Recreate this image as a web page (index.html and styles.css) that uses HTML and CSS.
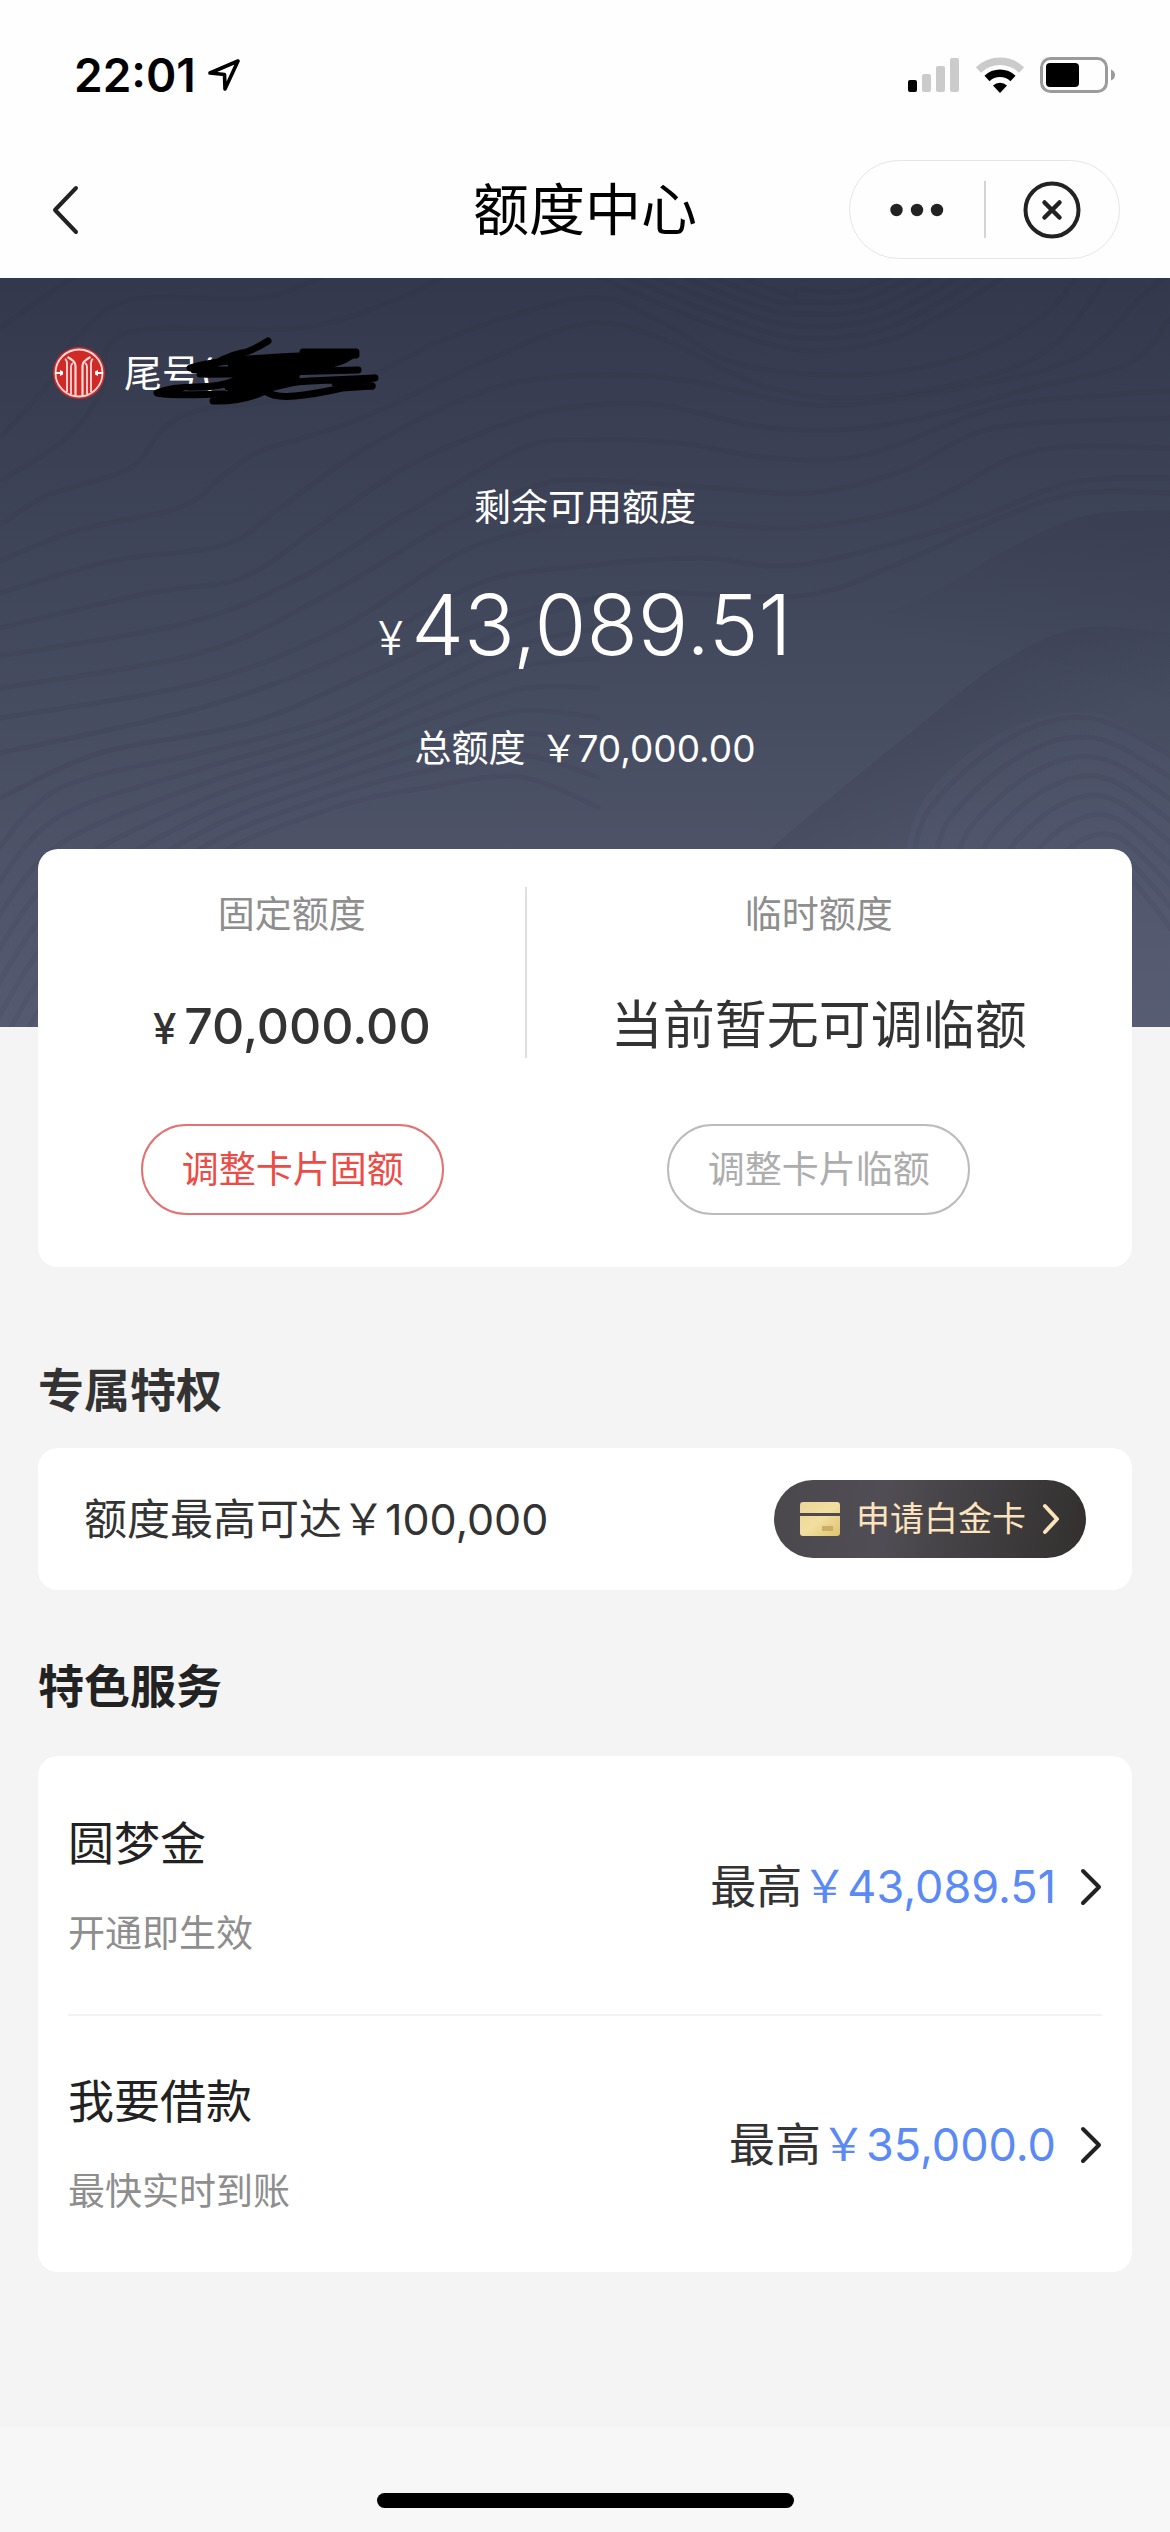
FILE: index.html
```html
<!DOCTYPE html>
<html lang="zh-CN">
<head>
<meta charset="utf-8">
<meta name="viewport" content="width=device-width, initial-scale=1">
<title>额度中心</title>
<link rel="stylesheet" href="styles.css">
</head>
<body>
<header class="top">
  <div class="status">
    <div class="status-left">
      <time class="clock">22:01</time>
      <svg class="location" width="32" height="32" viewBox="0 0 32 32" aria-hidden="true"><path d="M2 14 30 2 17 30 16.500 15.500Z" fill="none" stroke="#000" stroke-width="3.600" stroke-linejoin="round"/></svg>
    </div>
    <div class="status-right">
      <svg width="52" height="36" viewBox="0 0 52 36" aria-hidden="true">
        <rect x="0" y="23" width="9" height="12" rx="2"/>
        <g fill="#cbcbcb"><rect x="14" y="17" width="9" height="18" rx="2"/><rect x="28" y="9" width="9" height="26" rx="2"/><rect x="42" y="1" width="9" height="34" rx="2"/></g>
      </svg>
      <svg width="48" height="36" viewBox="0 0 48 36" aria-hidden="true">
        <path d="M2.500 13a31 31 0 0 1 43 0" fill="none" stroke="#cbcbcb" stroke-width="7.500"/>
        <path d="M11 21.500a19 19 0 0 1 26 0" fill="none" stroke="#000" stroke-width="7.500"/>
        <path d="M24 36 17 28.500a10 10 0 0 1 14 0Z"/>
      </svg>
      <svg width="76" height="36" viewBox="0 0 76 36" aria-hidden="true">
        <rect x="1.500" y="1.500" width="65" height="33" rx="9" fill="none" stroke="#9b9b9b" stroke-width="3"/>
        <rect x="6" y="6" width="33" height="24" rx="4"/>
        <path d="M71 12.500q4 1.500 4 5.500t-4 5.500Z" fill="#9b9b9b"/>
      </svg>
    </div>
  </div>
  <nav class="nav">
    <button class="back" type="button" aria-label="返回">
      <svg width="30" height="50" viewBox="0 0 30 50" aria-hidden="true"><path d="M26 3 5 25 26 47" fill="none" stroke="#222" stroke-width="4" stroke-linecap="round" stroke-linejoin="round"/></svg>
    </button>
    <h1 class="title">额度中心</h1>
    <div class="capsule">
      <button class="capsule-button" type="button" aria-label="更多">
        <svg width="54" height="14" viewBox="0 0 54 14" aria-hidden="true"><g fill="#222"><circle cx="6.500" cy="7" r="6.200"/><circle cx="27" cy="7" r="6.200"/><circle cx="47" cy="7" r="6.200"/></g></svg>
      </button>
      <button class="capsule-button" type="button" aria-label="关闭">
        <svg width="58" height="58" viewBox="0 0 58 58" aria-hidden="true"><g fill="none" stroke="#222" stroke-width="4"><circle cx="29" cy="29" r="26.500"/><path d="m21.500 21.500 15 15m0-15-15 15" stroke-width="4.500" stroke-linecap="round"/></g></svg>
      </button>
    </div>
  </nav>
</header>

<main class="content">
  <section class="hero">
    <svg class="contours" viewBox="0 0 1170 749" preserveAspectRatio="none" aria-hidden="true"></svg>
    <div class="account">
      <svg class="logo" width="54" height="52" viewBox="0 0 54 52" aria-hidden="true">
        <circle cx="27" cy="26" r="26" fill="#cf2a26"/>
        <g fill="none" stroke="#f7d9dc" stroke-width="1.800">
          <circle cx="27" cy="26" r="23.500"/>
          <path d="M15 45V17q0-4-2-5M39 45V17q0-4 2-5M19 47V20q0-3 2-4M35 47V20q0-3-2-4"/>
          <path d="M23.500 49V19q0-5-8-9M30.500 49V19q0-5 8-9" stroke-width="2.200"/>
        </g>
        <path d="M3 26h8m32 0h8" stroke="#fff" stroke-width="2"/>
        <path d="M8 23v6l3-1.500v-3ZM46 23v6l-3-1.500v-3Z" fill="#fff"/>
      </svg>
      <span class="account-label">尾号(</span>
      <svg class="scribble" width="236" height="74" viewBox="0 0 236 74" aria-hidden="true">
        <path d="M76 24 110 20 162 15 190 22 178 32 150 38 148 48 110 57 96 62 76 56 84 44Z"/>
        <g fill="none" stroke="#000" stroke-width="7" stroke-linecap="round" stroke-linejoin="round">
          <path d="M118 4Q102 14 92 16T72 23T60 33"/>
          <path d="M40 31Q52 27 78 24T150 19L206 18"/>
          <path d="M153 15H206Q196 24 182 27T140 33H44"/>
          <path d="M56 37 208 33"/>
          <path d="M50 37H90"/>
          <path d="M78 50 160 44 225 41 185 46 222 49"/>
          <path d="M84 44Q70 50 46 50T7 56Q16 59 74 57"/>
          <path d="M63 64Q92 65 115 54Q124 61 145 59T192 51L222 49"/>
          <path d="M70 61 108 52"/>
        </g>
      </svg>
    </div>
    <p class="caption">剩余可用额度</p>
    <p class="balance"><span class="balance-sign">¥</span>43,089.51</p>
    <p class="caption total"><span>总额度</span><span class="total-amount">￥70,000.00</span></p>
  </section>

  <section class="card limits">
    <div class="limit fixed">
      <div class="figures">
        <h2 class="limit-name">固定额度</h2>
        <p class="limit-value amount"><span class="sign">¥</span>70,000.00</p>
      </div>
      <button class="pill pill-red" type="button">调整卡片固额</button>
    </div>
    <div class="limit temporary">
      <div class="figures">
        <h2 class="limit-name">临时额度</h2>
        <p class="limit-value">当前暂无可调临额</p>
      </div>
      <button class="pill" type="button" disabled>调整卡片临额</button>
    </div>
  </section>

  <h2 class="heading heading-first">专属特权</h2>
  <section class="card privilege">
    <p class="privilege-text">额度最高可达￥100,000</p>
    <button class="apply" type="button">
      <svg width="40" height="34" viewBox="0 0 40 34" aria-hidden="true">
        <defs><linearGradient id="gold" x2="1" y2="1"><stop stop-color="#ebd497"/><stop offset=".5" stop-color="#f2dfa0"/><stop offset="1" stop-color="#dfc172"/></linearGradient></defs>
        <path d="M3 0H37a3 3 0 0 1 3 3V11H0V3a3 3 0 0 1 3-3ZM0 14H40V31a3 3 0 0 1-3 3H3a3 3 0 0 1-3-3Z" fill="url(#gold)"/>
        <rect x="22" y="24" width="11" height="5" fill="#c9ac65"/>
      </svg>
      <span>申请白金卡</span>
      <svg width="18" height="32" viewBox="0 0 18 32" aria-hidden="true"><path d="M3 3 15 16 3 29" fill="none" stroke="#fbe3bd" stroke-width="4" stroke-linecap="round" stroke-linejoin="round"/></svg>
    </button>
  </section>

  <h2 class="heading heading-second">特色服务</h2>
  <section class="card services">
    <a class="service" href="#dream">
      <span class="service-info"><span class="service-name">圆梦金</span><span class="service-note">开通即生效</span></span>
      <span class="service-amount">最高<span class="blue">￥43,089.51</span></span>
      <svg width="22" height="38" viewBox="0 0 22 38" aria-hidden="true"><path d="M3 3 19 19 3 35" fill="none" stroke="#222" stroke-width="4" stroke-linecap="round" stroke-linejoin="round"/></svg>
    </a>
    <a class="service" href="#loan">
      <span class="service-info"><span class="service-name">我要借款</span><span class="service-note">最快实时到账</span></span>
      <span class="service-amount">最高<span class="blue">￥35,000.0</span></span>
      <svg width="22" height="38" viewBox="0 0 22 38" aria-hidden="true"><path d="M3 3 19 19 3 35" fill="none" stroke="#222" stroke-width="4" stroke-linecap="round" stroke-linejoin="round"/></svg>
    </a>
  </section>
</main>

<footer class="home"><div class="home-bar"></div></footer>
<script src="contours.js"></script>
</body>
</html>
```
FILE: styles.css
```css
* { box-sizing: border-box; }

body {
  margin: 0;
  min-height: 100vh;
  display: flex;
  flex-direction: column;
  background: #f4f4f4;
  color: #333;
  font-family: Inter, "Noto Sans CJK SC", sans-serif;
  font-size: 37px;
  line-height: 52px;
}

h1, h2, p { margin: 0; font-weight: 400; }
button { padding: 0; border: 0; background: none; font: inherit; color: inherit; }
a { color: inherit; text-decoration: none; }
svg { display: block; flex: none; }

/* Status bar and navigation */
.top { background: #fefefe; color: #000; }

.status {
  display: flex;
  justify-content: space-between;
  align-items: center;
  padding: 48px 54px 48px 74px;
  line-height: 54px;
}
.status-left { display: flex; align-items: center; gap: 12px; }
.status-right { display: flex; align-items: center; gap: 16px; }
.clock { font-size: 46px; font-weight: 600; }

.nav {
  display: grid;
  grid-template-columns: 1fr auto 1fr;
  align-items: center;
  padding: 10px 50px 19px;
}
.back { justify-self: start; }
.title { font-size: 56px; line-height: 80px; }
.capsule {
  justify-self: end;
  display: flex;
  align-items: center;
  width: 271px;
  height: 99px;
  border: 1px solid #e6e6e6;
  border-radius: 50px;
}
.capsule-button {
  flex: 1;
  display: flex;
  justify-content: center;
  align-items: center;
  height: 57px;
}
.capsule-button + .capsule-button { border-left: 2px solid #d4d4d4; }

/* Available balance */
.hero {
  position: relative;
  padding: 69px 52px 252px;
  background: linear-gradient(#33384c, #444a5e 50%, #555a70);
  color: #fff;
  text-align: center;
}
.contours { position: absolute; inset: 0; width: 100%; height: 100%; }
.account {
  position: relative;
  display: flex;
  align-items: center;
  gap: 18px;
}
.account-label { font-size: 38px; }
.scribble { position: absolute; left: 98px; top: -10px; }
.caption { position: relative; margin-top: 83px; }
.balance {
  position: relative;
  margin-top: 41px;
  font-size: 84px;
  font-weight: 350;
  line-height: 100px;
}
.balance-sign {
  margin-right: 8px;
  font-size: 46px;
  line-height: 46px;
}
.total {
  display: flex;
  justify-content: center;
  gap: 15px;
  margin-top: 48px;
}

/* Cards */
.card {
  margin: 0 38px;
  border-radius: 20px;
  background: #fff;
}

.limits {
  position: relative;
  display: flex;
  margin-top: -178px;
  padding: 38px 21px 52px;
  text-align: center;
}
.limit { display: flex; flex-direction: column; align-items: center; gap: 66px; }
.fixed { flex: 4; }
.temporary { flex: 5; }
.figures { width: 100%; display: flex; flex-direction: column; gap: 51px; }
.fixed .figures { border-right: 2px solid #dfdfe5; }
.limit-name { font-size: 37px; line-height: 56px; color: #8e8e8e; }
.limit-value { font-size: 52px; line-height: 64px; }
.amount { font-size: 50px; font-weight: 500; }
.sign { margin-right: 8px; font-size: 42px; line-height: 42px; }

.pill {
  width: 303px;
  height: 91px;
  border: 2px solid #bcbcbc;
  border-radius: 46px;
  color: #adadad;
}
.pill-red { border-color: #e37272; color: #ec4b46; }

.heading { padding: 0 38px; font-size: 46px; font-weight: 700; line-height: 60px; }
.heading-first { margin: 93px 0 28px; }
.heading-second { margin: 66px 0 40px; color: #222; }

.privilege {
  display: flex;
  justify-content: space-between;
  align-items: center;
  padding: 32px 46px;
}
.privilege-text { font-size: 43px; }
.apply {
  display: flex;
  align-items: center;
  justify-content: center;
  gap: 16px;
  width: 312px;
  height: 78px;
  border-radius: 39px;
  background: linear-gradient(100deg, #4a484d, #504d54 35%, #322f2e);
  color: #fbe3bd;
  font-size: 34px;
}

.services { padding: 0 30px; }
.service { display: flex; align-items: center; padding: 57px 0 54px; }
.service + .service { border-top: 2px solid #f2f2f2; padding-top: 55px; }
.service-info { flex: 1; display: flex; flex-direction: column; gap: 35px; }
.service-name { font-size: 46px; line-height: 60px; color: #222; }
.service-note { color: #8e8e8e; }
.service-amount { margin-right: 24px; font-size: 46px; line-height: 60px; }
.blue { color: #5b8af5; font-size: 45px; }

/* Home indicator */
.home { margin-top: auto; padding: 66px 0 24px; background: #f7f7f7; }
.home-bar { width: 417px; height: 15px; margin: 0 auto; border-radius: 8px; background: #000; }
```
FILE: contours.js
```javascript
// Soft contour lines behind the balance.
const lines = [
  [0,50, 50,15, 80,-5],
  [0,160, 49,105, 75,62, 130,22, 260,20, 330,-5],
  [0,203, 63,163, 100,117, 125,55, 300,50, 400,20, 450,-5],
  [0,247, 48,217, 130,190, 164,150, 209,130, 336,113, 448,60, 585,20, 660,43, 735,85, 850,97, 960,80, 1040,40, 1080,-5],
  [0,283, 75,253, 179,230, 224,197, 261,173, 354,143, 485,83, 585,46, 660,60, 770,110, 885,118, 1035,80, 1110,-5],
  [0,315, 112,283, 224,267, 280,230, 366,170, 485,113, 585,97, 690,103, 810,127, 920,117, 1070,83, 1140,20, 1170,-5],
  [0,350, 149,315, 242,300, 317,250, 410,187, 522,140, 585,128, 660,127, 770,150, 885,147, 1033,110, 1130,85, 1170,40],
  [0,378, 187,345, 300,300, 410,233, 522,170, 585,162, 680,165, 770,180, 865,177, 995,130, 1107,117, 1170,113],
  [0,410, 200,375, 330,315, 440,250, 530,210, 585,202, 715,210, 810,215, 902,193, 995,150, 1170,140],
  [0,440, 200,405, 340,350, 470,270, 585,245, 700,245, 800,250, 920,227, 1033,173, 1170,170],
  [0,475, 200,430, 350,375, 480,305, 585,288, 700,280, 800,287, 958,247, 1070,205, 1170,200],
  [0,520, 100,475, 250,445, 370,395, 500,340, 640,315, 800,318, 900,285, 1000,240, 1080,215, 1170,215]
];
const fine = [];
// Tight ripples at the top.
for (let i = 0; i < 6; i++) fine.push([590 + i * 28,-5, 700 + i * 18,42 - i * 5, 800,72 - i * 12, 900 - i * 10,58 - i * 9, 1010 - i * 22,-5]);
// Slopes running down towards the lower left.
for (let i = 0; i < 8; i++) fine.push([-5,575 + i * 34, 60,510 + i * 28, 200,475 + i * 16, 330,440 + i * 13, 430,390 + i * 17, 520,345 + i * 22, 600,320 + i * 30]);
// Rings in the lower right corner.
for (let i = 0; i < 9; i++) fine.push([910 + i * 22,600, 930 + i * 20,530 + i * 10, 1010 + i * 12,460 + i * 17, 1090 + i * 5,440 + i * 20, 1175,480 + i * 22]);

function curve(p) {
  const at = i => { const k = Math.max(0, Math.min(p.length / 2 - 1, i)); return [p[2 * k], p[2 * k + 1]]; };
  let d = `M${at(0)}`;
  for (let i = 0; i < p.length / 2 - 1; i++) {
    const [a, b, c, e] = [at(i - 1), at(i), at(i + 1), at(i + 2)];
    d += `C${b[0] + (c[0] - a[0]) / 6},${b[1] + (c[1] - a[1]) / 6} ${c[0] - (e[0] - b[0]) / 6},${c[1] - (e[1] - b[1]) / 6} ${c}`;
  }
  return d;
}

const draw = p => `<path d="${curve(p)}"/>`;
const shade = curve([735,352, 845,347, 940,310, 1015,267, 1088,237, 1170,232]);
const band = curve([760,580, 830,520, 910,455, 1000,385, 1080,350, 1170,355]);
const glow = curve([900,600, 925,520, 1000,455, 1090,435, 1170,475]);
document.querySelector('.contours').innerHTML =
  `<defs>
    <linearGradient id="shade" gradientUnits="userSpaceOnUse" x1="1080" y1="235" x2="1030" y2="400"><stop stop-color="#2d3042" stop-opacity=".22"/><stop offset="1" stop-color="#2d3042" stop-opacity="0"/></linearGradient>
    <linearGradient id="band" gradientUnits="userSpaceOnUse" x1="970" y1="400" x2="1040" y2="500"><stop stop-color="#2d3042" stop-opacity=".18"/><stop offset="1" stop-color="#2d3042" stop-opacity="0"/></linearGradient>
    <linearGradient id="glow" x2="0" y2="1"><stop stop-color="#5a6076" stop-opacity=".1"/><stop offset="1" stop-color="#5a6076" stop-opacity=".4"/></linearGradient>
  </defs>
  <path d="${shade}V420Q950,340 735,352Z" fill="url(#shade)"/>
  <path d="${band}V749H760Z" fill="url(#band)"/>
  <path d="${glow}V749H900Z" fill="url(#glow)"/>
  <g fill="none" stroke="#2b2c40" stroke-width="5">
    <g stroke-opacity=".13">${lines.map(draw).join('')}</g>
    <g stroke-opacity=".08">${fine.map(draw).join('')}</g>
  </g>`;
```
